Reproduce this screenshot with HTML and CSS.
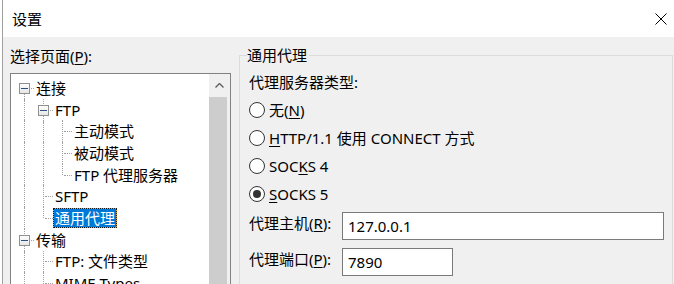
FILE: index.html
```html
<!DOCTYPE html>
<html lang="zh-CN">
<head>
    <meta charset="UTF-8">
    <title>设置</title>
    <link rel="stylesheet" href="styles.css">
</head>
<body>
    <div class="window">
        <div class="titlebar">
            <span class="title">设置</span>
            <svg class="close" width="12" height="12" viewBox="0 0 12 12">
                <path d="M0.5 0.5 L11.5 11.5 M11.5 0.5 L0.5 11.5" stroke="#000" stroke-width="1" fill="none"/>
            </svg>
        </div>
        <div class="content">
            <div class="pages">
                <div class="pages-label">选择页面(<u>P</u>):</div>
                <div class="tree">
                    <div class="tree-items">
                        <div class="node">
                            <span class="g box bottom"><span class="exp"></span></span>
                            <span class="node-label">连接</span>
                        </div>
                        <div class="node">
                            <span class="g v"></span>
                            <span class="g box top bottom"><span class="exp"></span></span>
                            <span class="node-label">FTP</span>
                        </div>
                        <div class="node">
                            <span class="g v"></span><span class="g v"></span><span class="g t"></span>
                            <span class="node-label">主动模式</span>
                        </div>
                        <div class="node">
                            <span class="g v"></span><span class="g v"></span><span class="g t"></span>
                            <span class="node-label">被动模式</span>
                        </div>
                        <div class="node">
                            <span class="g v"></span><span class="g v"></span><span class="g l"></span>
                            <span class="node-label">FTP 代理服务器</span>
                        </div>
                        <div class="node">
                            <span class="g v"></span><span class="g t"></span>
                            <span class="node-label">SFTP</span>
                        </div>
                        <div class="node">
                            <span class="g v"></span><span class="g l"></span>
                            <span class="node-label selected">通用代理</span>
                        </div>
                        <div class="node">
                            <span class="g box top bottom"><span class="exp"></span></span>
                            <span class="node-label">传输</span>
                        </div>
                        <div class="node">
                            <span class="g v"></span><span class="g t"></span>
                            <span class="node-label">FTP: 文件类型</span>
                        </div>
                        <div class="node">
                            <span class="g v"></span><span class="g t"></span>
                            <span class="node-label">MIME Types</span>
                        </div>
                    </div>
                    <div class="scrollbar">
                        <div class="scroll-up">
                            <svg width="9" height="5" viewBox="0 0 9 5">
                                <polyline points="0.5,4.5 4.5,0.5 8.5,4.5" stroke="#606060" stroke-width="1.4" fill="none"/>
                            </svg>
                        </div>
                        <div class="scroll-thumb"></div>
                    </div>
                </div>
            </div>

            <fieldset class="group">
                <legend>通用代理</legend>
                <div class="type-label">代理服务器类型:</div>
                <div class="radios">
                    <div class="radio-row"><span class="radio"></span><span>无(<u>N</u>)</span></div>
                    <div class="radio-row"><span class="radio"></span><span><u>H</u>TTP/1.1 使用 CONNECT 方式</span></div>
                    <div class="radio-row"><span class="radio"></span><span>SOC<u>K</u>S 4</span></div>
                    <div class="radio-row"><span class="radio checked"></span><span><u>S</u>OCKS 5</span></div>
                </div>
                <div class="field-row host">
                    <span class="field-label">代理主机(<u>R</u>):</span>
                    <div class="input wide">127.0.0.1</div>
                </div>
                <div class="field-row port">
                    <span class="field-label">代理端口(<u>P</u>):</span>
                    <div class="input short">7890</div>
                </div>
            </fieldset>
        </div>
    </div>
</body>
</html>
```

FILE: styles.css
```css
body {
    margin: 0;
    height: 284px;
    overflow: hidden;
    background-color: #ffffff;
    font-family: "Noto Sans", "Noto Sans CJK SC", sans-serif;
    font-size: 15px;
    color: #000;
}

u {
    text-underline-offset: 2px;
}

.window {
    margin-left: 2px;
    border-left: 1px solid #a0a0a0;
    height: 284px;
    display: flex;
    flex-direction: column;
}

.titlebar {
    height: 37px;
    flex-shrink: 0;
    background-color: #fff;
    display: flex;
    align-items: center;
    justify-content: space-between;
    padding: 0 7px 0 9px;
}

.title {
    line-height: 20px;
}

.content {
    flex: 1;
    background-color: #f0f0f0;
    display: flex;
    gap: 8px;
    padding-left: 7px;
    overflow: hidden;
}

/* left: page tree */
.pages {
    width: 221px;
    flex-shrink: 0;
    padding-top: 9px;
    display: flex;
    flex-direction: column;
}

.pages-label {
    line-height: 20px;
    margin-bottom: 7px;
}

.tree {
    flex: 1;
    background-color: #fff;
    border: 1px solid #828282;
    border-bottom: none;
    display: flex;
}

.tree-items {
    flex: 1;
    padding: 3px 0 0 4px;
}

.node {
    height: 21.7px;
    display: flex;
    align-items: center;
}

.g {
    width: 19px;
    height: 100%;
    flex-shrink: 0;
    position: relative;
}

.g::before,
.g::after {
    content: "";
    position: absolute;
}

.g.v::before,
.g.t::before {
    left: 9px;
    top: 0;
    bottom: 0;
    border-left: 1px dotted #a0a0a0;
}

.g.l::before {
    left: 9px;
    top: 0;
    height: 50%;
    border-left: 1px dotted #a0a0a0;
}

.g.t::after,
.g.l::after {
    left: 11px;
    right: 0;
    top: 50%;
    border-top: 1px dotted #a0a0a0;
}

.g.box::after {
    left: 16px;
    right: 0;
    top: 50%;
    border-top: 1px dotted #a0a0a0;
}

.g.box.top::before {
    left: 9px;
    top: 0;
    height: calc(50% - 6px);
    border-left: 1px dotted #a0a0a0;
}

.g.box.bottom .exp::after {
    content: "";
    position: absolute;
    left: 4px;
    top: 10px;
    height: 7px;
    border-left: 1px dotted #a0a0a0;
}

.exp {
    position: absolute;
    left: 4px;
    top: calc(50% - 5px);
    width: 11px;
    height: 11px;
    box-sizing: border-box;
    border: 1px solid #919191;
    background: linear-gradient(#ffffff, #e6e6e6);
}

.exp::before {
    content: "";
    position: absolute;
    left: 1px;
    top: 4px;
    width: 7px;
    height: 1px;
    background-color: #2c4f86;
}

.node-label {
    margin-left: 0;
    padding: 0 1px;
    line-height: 18px;
    border: 1px solid transparent;
    white-space: nowrap;
}

.node-label.selected {
    color: #fff;
    border: 1px dotted #1a1a1a;
    background: linear-gradient(#0078d7, #0078d7) padding-box, #f0a030 border-box;
}

.scrollbar {
    width: 21px;
    flex-shrink: 0;
    background-color: #f0f0f0;
    display: flex;
    flex-direction: column;
}

.scroll-up {
    height: 23px;
    display: flex;
    align-items: center;
    justify-content: center;
}

.scroll-thumb {
    flex: 1;
    margin: 0 3px 0 0;
    background-color: #cdcdcd;
}

/* right: group box */
.group {
    width: 434px;
    box-sizing: border-box;
    min-height: 280px;
    margin: 8px 0 0 0;
    padding: 7px 0 0 9px;
    border: 1px solid #dcdcdc;
}

.group legend {
    margin-left: -2px;
    padding: 0 2px 0 0;
    line-height: 20px;
}

.type-label {
    line-height: 20px;
}

.radios {
    margin-top: 4px;
}

.radio-row {
    height: 28px;
    display: flex;
    align-items: center;
    gap: 4px;
    line-height: 20px;
}

.radio {
    width: 16px;
    height: 16px;
    box-sizing: border-box;
    border: 1px solid #333;
    border-radius: 50%;
    background-color: #fff;
    display: flex;
    align-items: center;
    justify-content: center;
}

.radio.checked::after {
    content: "";
    width: 8px;
    height: 8px;
    border-radius: 50%;
    background-color: #333;
}

.field-row {
    display: flex;
    align-items: flex-start;
}

.field-row.host {
    margin-top: 4px;
}

.field-row.port {
    margin-top: 8px;
}

.field-label {
    width: 93px;
    flex-shrink: 0;
    margin-top: 1px;
    line-height: 20px;
}

.input {
    height: 28px;
    box-sizing: border-box;
    border: 1px solid #7a7a7a;
    background-color: #fff;
    padding-left: 5px;
    line-height: 26px;
}

.input.wide {
    width: 322px;
}

.input.short {
    width: 111px;
}
```
